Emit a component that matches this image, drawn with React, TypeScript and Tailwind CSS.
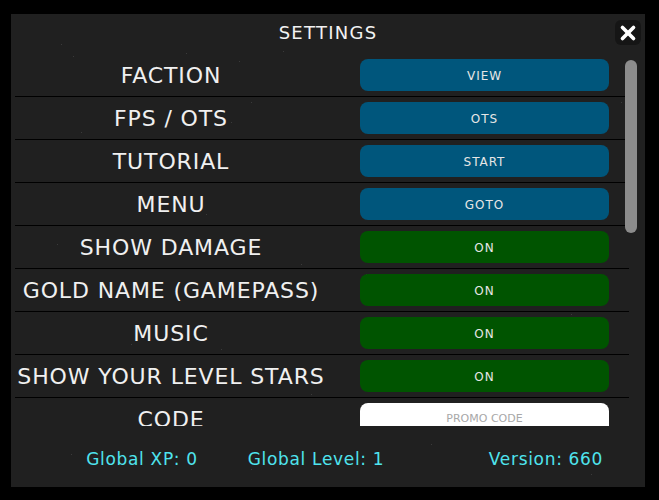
import { X } from "lucide-react";

type Row = {
  label: string;
  value: string;
  kind: "blue" | "green" | "input";
};

const rows: Row[] = [
  { label: "FACTION", value: "VIEW", kind: "blue" },
  { label: "FPS / OTS", value: "OTS", kind: "blue" },
  { label: "TUTORIAL", value: "START", kind: "blue" },
  { label: "MENU", value: "GOTO", kind: "blue" },
  { label: "SHOW DAMAGE", value: "ON", kind: "green" },
  { label: "GOLD NAME (GAMEPASS)", value: "ON", kind: "green" },
  { label: "MUSIC", value: "ON", kind: "green" },
  { label: "SHOW YOUR LEVEL STARS", value: "ON", kind: "green" },
  { label: "CODE", value: "PROMO CODE", kind: "input" },
];

// faint specks on the panel background
const stars = [
  [50, 30], [62, 42], [145, 52], [175, 39], [228, 47], [272, 37], [610, 88],
  [240, 88], [220, 108], [70, 118], [46, 230], [195, 200], [290, 250],
  [500, 270], [560, 300], [120, 330], [300, 380], [470, 405], [60, 440],
  [240, 455], [420, 430], [580, 460], [210, 335], [355, 260],
];

export default function App() {
  return (
    <div className="h-[500px] w-[659px] overflow-hidden bg-black pl-[11px] pt-[14px] font-['DejaVu_Sans',sans-serif]">
      <div className="relative flex h-[473px] w-[634px] flex-col bg-[#202020]">
        {stars.map(([x, y], i) => (
          <div
            key={i}
            className="absolute h-px w-px bg-[#3a3a3a]"
            style={{ left: x, top: y }}
          />
        ))}

        {/* Header */}
        <div className="flex h-[40px] items-center justify-center pb-[3px]">
          <h1 className="text-[18px] tracking-[0.07em] text-[#f2f2f2]">SETTINGS</h1>
        </div>
        <button className="absolute right-[4px] top-[6px] flex h-[25px] w-[26px] items-center justify-center rounded-[6px] bg-[#151515]">
          <X className="size-[22px] text-white" strokeWidth={4} />
        </button>

        {/* Scrolling list */}
        <div className="relative h-[372px] overflow-hidden pl-[4px]">
          {rows.map((row) => (
            <div
              key={row.label}
              className="flex h-[43px] w-[614px] shrink-0 items-start border-b border-black pt-[5px]"
            >
              <div className="flex h-[32px] w-[312px] items-center justify-center whitespace-nowrap text-[22px] tracking-[0.04em] text-[#f0f0f0]">
                {row.label}
              </div>
              {row.kind === "input" ? (
                <div className="ml-[33px] flex h-[32px] w-[249px] items-center justify-center rounded-[8px] bg-white pt-px text-[11px] text-[#a8a8a8]">
                  {row.value}
                </div>
              ) : (
                <div
                  className={
                    "ml-[33px] flex h-[32px] w-[249px] items-center justify-center rounded-[8px] pt-px text-[12px] tracking-[0.08em] text-[#e6e6e6] " +
                    (row.kind === "blue" ? "bg-[#00567c]" : "bg-[#005400]")
                  }
                >
                  {row.value}
                </div>
              )}
            </div>
          ))}
          {/* Scrollbar */}
          <div className="absolute left-[614px] top-[6px] h-[173px] w-[12px] rounded-full bg-[#8c8c8c]" />
        </div>

        {/* Footer */}
        <div className="flex flex-1 items-center pl-[51px] pt-[6px] text-[17px] tracking-[0.04em] text-[#4fe4ee]">
          <div className="w-[160px] text-center">Global XP: 0</div>
          <div className="ml-[14px] w-[160px] text-center">Global Level: 1</div>
          <div className="ml-[70px] w-[160px] text-center">Version: 660</div>
        </div>
      </div>
    </div>
  );
}
